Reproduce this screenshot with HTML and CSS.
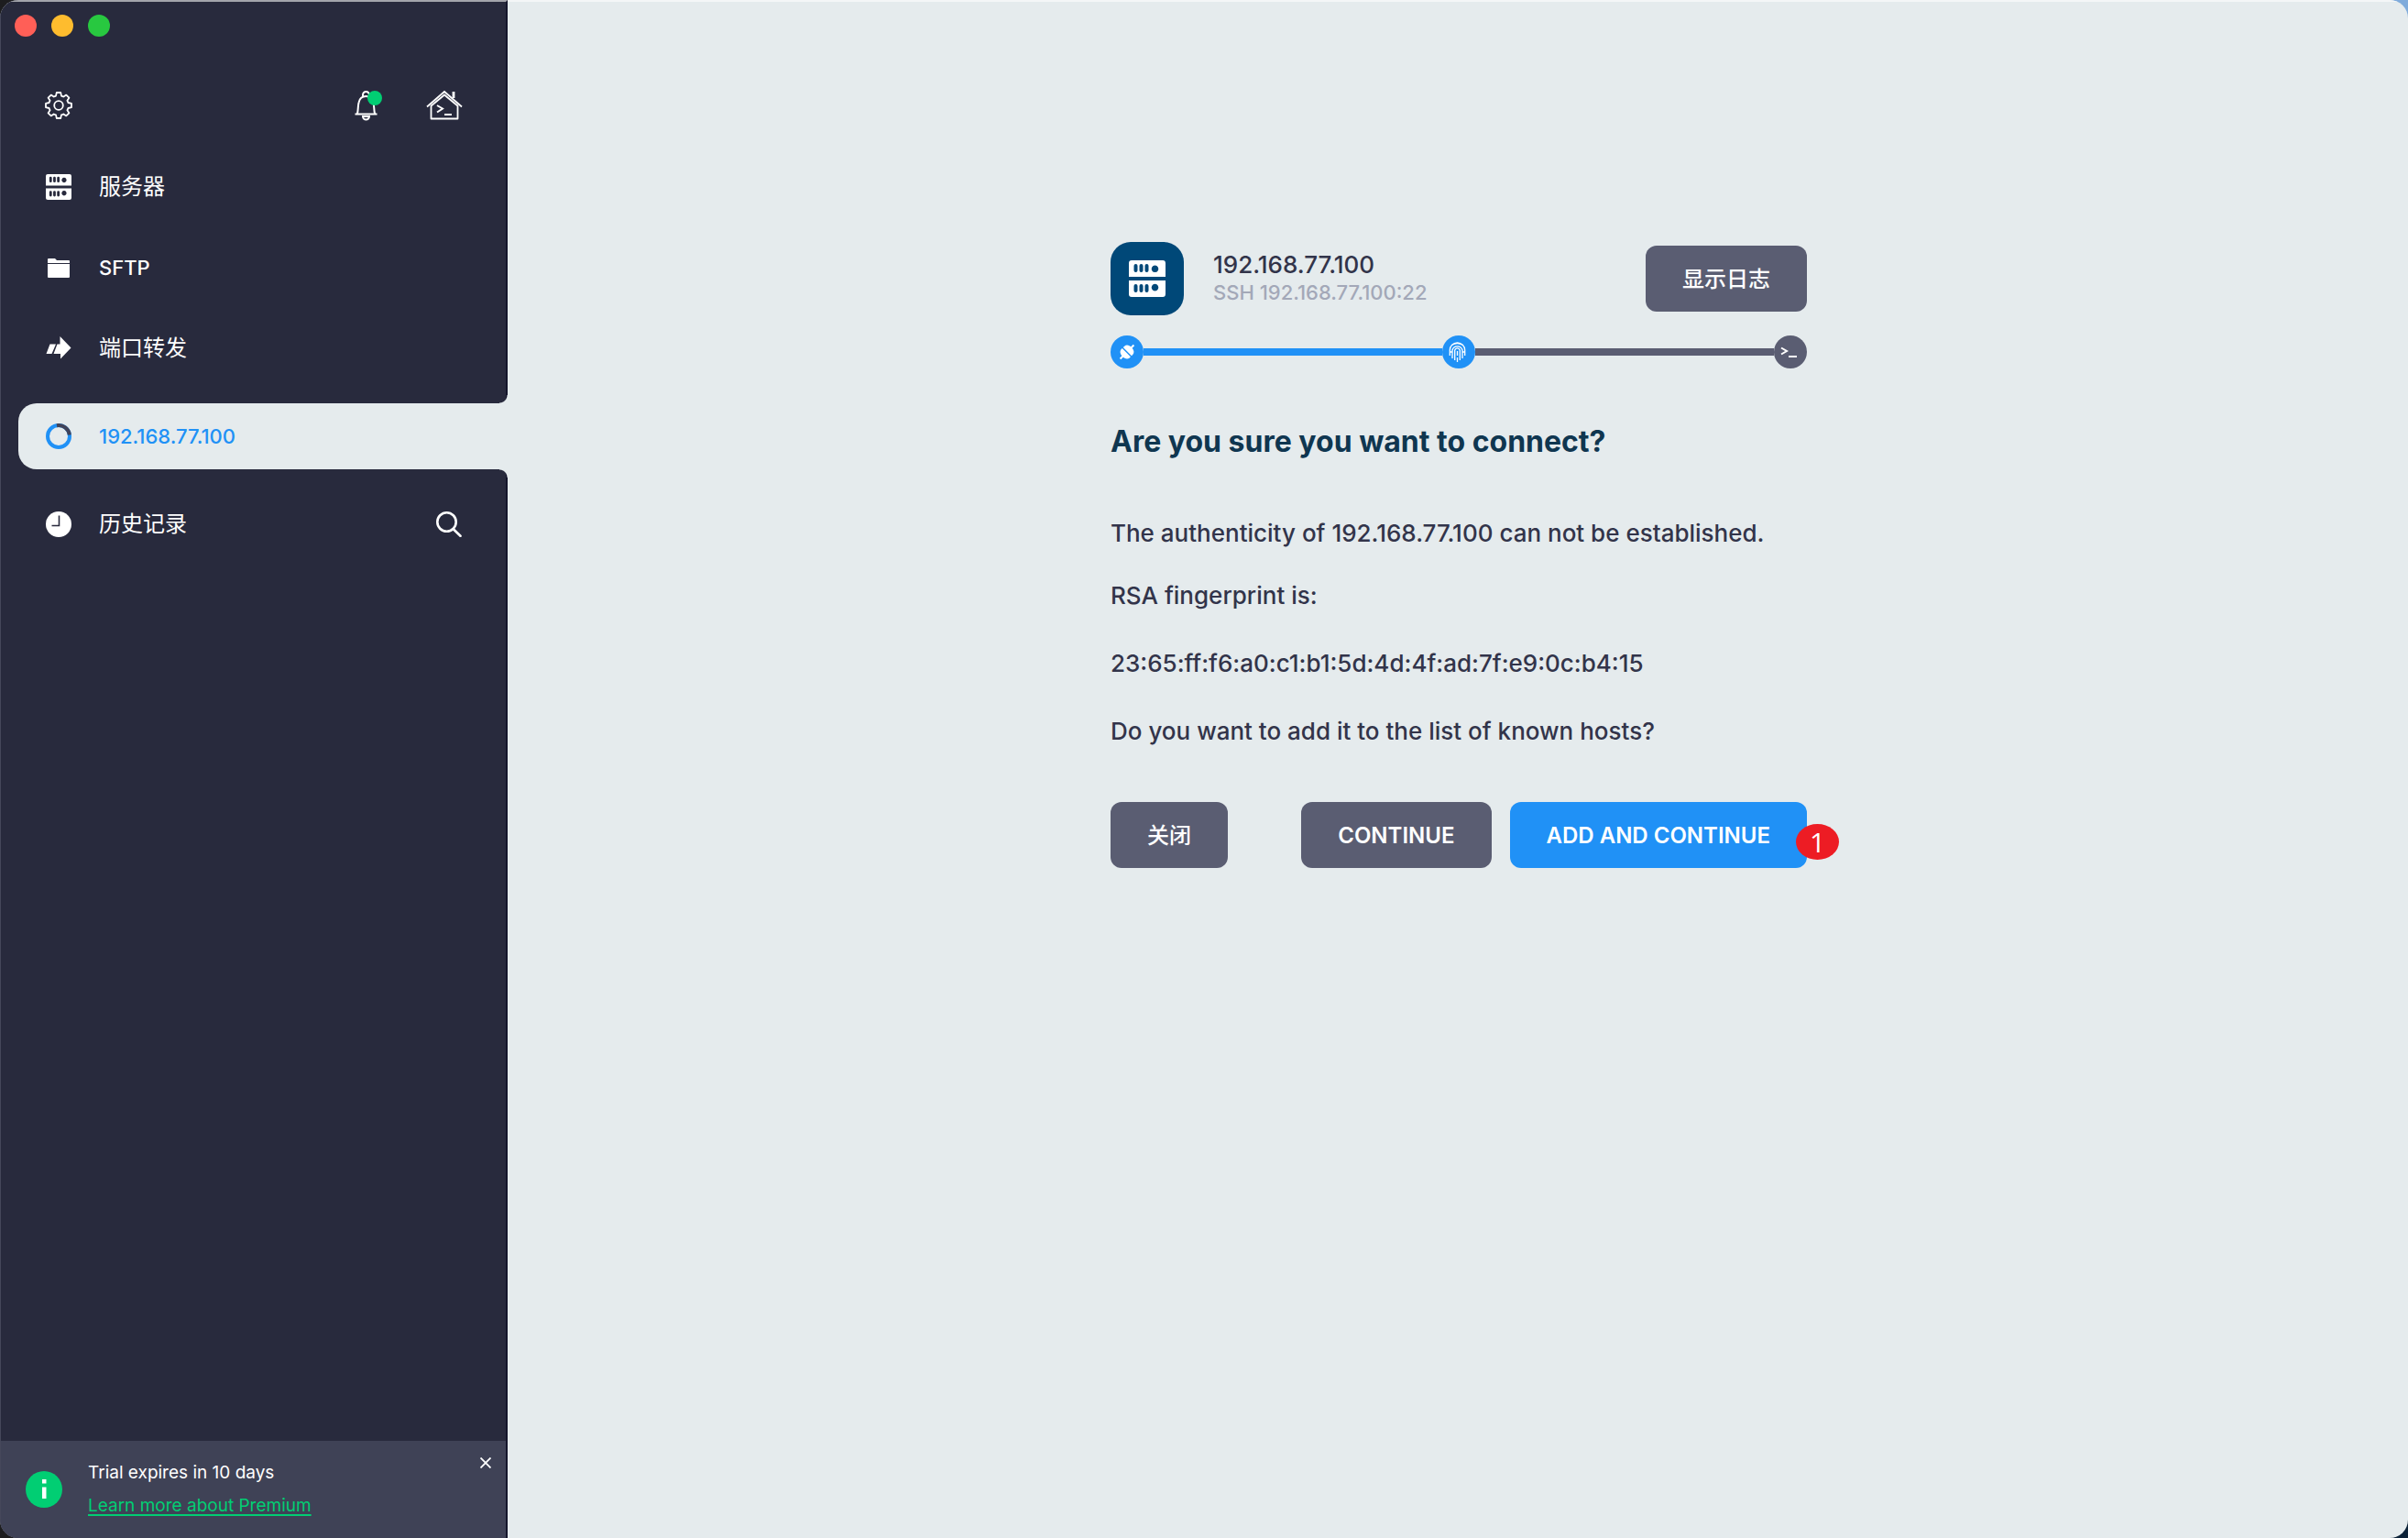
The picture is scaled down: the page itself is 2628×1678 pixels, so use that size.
FILE: index.html
```html
<!DOCTYPE html>
<html lang="zh-CN">
<head>
<meta charset="utf-8">
<title>192.168.77.100</title>
<meta name="viewport" content="width=device-width, initial-scale=1">
<link rel="stylesheet" href="styles.css">
</head>
<body>
<svg class="sprite" aria-hidden="true">
  <symbol id="server" viewBox="0 0 40 40">
    <path fill-rule="evenodd" d="M3 0H37A3 3 0 0 1 40 3V18H0V3A3 3 0 0 1 3 0ZM7.500 4A2 2 0 0 0 5.500 6V11A2 2 0 0 0 9.500 11V6A2 2 0 0 0 7.500 4ZM13.500 4A2 2 0 0 0 11.500 6V11A2 2 0 0 0 15.500 11V6A2 2 0 0 0 13.500 4ZM19.500 4A2 2 0 0 0 17.500 6V11A2 2 0 0 0 21.500 11V6A2 2 0 0 0 19.500 4ZM28.500 5.500A3.800 3.800 0 1 0 28.510 5.500Z"/>
    <path fill-rule="evenodd" d="M0 22H40V37A3 3 0 0 1 37 40H3A3 3 0 0 1 0 37ZM7.500 26A2 2 0 0 0 5.500 28V33A2 2 0 0 0 9.500 33V28A2 2 0 0 0 7.500 26ZM13.500 26A2 2 0 0 0 11.500 28V33A2 2 0 0 0 15.500 33V28A2 2 0 0 0 13.500 26ZM19.500 26A2 2 0 0 0 17.500 28V33A2 2 0 0 0 21.500 33V28A2 2 0 0 0 19.500 26ZM28.500 25.800A3.800 3.800 0 1 0 28.510 25.800Z"/>
  </symbol>
</svg>
<div class="window">
  <aside class="sidebar">
    <div class="lights">
      <button class="light light-close" aria-label="Close window"></button>
      <button class="light light-min" aria-label="Minimize window"></button>
      <button class="light light-max" aria-label="Zoom window"></button>
    </div>
    <div class="tools">
      <button class="tool" aria-label="Settings">
        <svg width="30" height="30" viewBox="0 0 30 30" fill="none" stroke="#fff" stroke-width="1.800" stroke-linejoin="round"><path d="M12.800 1H17.200L18 4.600Q19.300 5 20.300 5.600L23.300 3.600L26.400 6.700L24.400 9.700Q25 10.700 25.400 12L29 12.800V17.200L25.400 18Q25 19.300 24.400 20.300L26.400 23.300L23.300 26.400L20.300 24.400Q19.300 25 18 25.400L17.200 29H12.800L12 25.400Q10.700 25 9.700 24.400L6.700 26.400L3.600 23.300L5.600 20.300Q5 19.300 4.600 18L1 17.200V12.800L4.600 12Q5 10.700 5.600 9.700L3.600 6.700L6.700 3.600L9.700 5.600Q10.700 5 12 4.600Z"/><circle cx="15" cy="15" r="4.800"/></svg>
      </button>
      <div class="tools-right">
        <button class="tool tool-bell" aria-label="Notifications">
          <svg width="30" height="34" viewBox="0 0 30 34" fill="none" stroke="#fff" stroke-width="2"><path d="M2.500 26.500H26.500M5 26C6 22 5.500 18 6.500 14C7.500 9 10.500 7 14.500 7C18.500 7 21.500 9 22.500 14C23.500 18 23 22 24 26"/><path d="M11 7V5.500A3.500 3.500 0 0 1 18 5.500V7"/><path d="M11 29H18A3.500 3.500 0 0 1 11 29Z"/></svg>
          <span class="dot"></span>
        </button>
        <button class="tool" aria-label="Local terminal">
          <svg width="40" height="34" viewBox="0 0 40 34" fill="none" stroke="#fff" stroke-width="1.800"><path d="M1 18.500L20 2L39 18.500"/><path d="M5.500 17.500V31.500H34.500V17.500L20 5.500Z" stroke-linejoin="round"/><path d="M30 2V9" stroke-width="2.800"/><path d="M12 17L18 20.500L12 24.500M20 27H28" stroke-width="2"/></svg>
        </button>
      </div>
    </div>
    <nav class="nav">
      <a class="item" href="#hosts"><svg class="icon" viewBox="0 0 28 28"><use href="#server" width="28" height="28"/></svg><span class="cjk">服务器</span></a>
      <a class="item" href="#sftp"><svg class="icon" viewBox="0 0 28 28"><path d="M2 5Q2 4 3 4H10L12 6H25Q26 6 26 7V9H2ZM2 10H26V24Q26 25 25 25H3Q2 25 2 24Z"/></svg><span>SFTP</span></a>
      <a class="item" href="#forwarding"><svg class="icon" viewBox="0 0 28 28"><path d="M4.500 9.500H11L6.500 20H0.500ZM12.500 9.500H15.500V1L27.500 13.500L16 25.500V20H8.500Z"/></svg><span class="cjk">端口转发</span></a>
      <a class="item item-active" href="#session"><svg class="icon" viewBox="0 0 28 28" fill="none"><circle cx="14" cy="14" r="12" stroke="#2091f6" stroke-width="4"/><path d="M12 2.200A12 12 0 0 1 25.900 12.500" stroke="#414359" stroke-width="4"/></svg><span>192.168.77.100</span></a>
      <div class="item item-history">
        <a class="history-link" href="#history"><svg class="icon" viewBox="0 0 28 28"><circle cx="14" cy="14" r="14"/><path d="M14.500 4.500V15.500H6.500" fill="none" stroke="#282a3d" stroke-width="1.600"/></svg><span class="cjk">历史记录</span></a>
        <button class="tool" aria-label="Search"><svg width="28" height="28" viewBox="0 0 28 28" fill="none" stroke="#fff" stroke-width="2.600" stroke-linecap="round"><circle cx="11.500" cy="11.500" r="10.200"/><path d="M19 19.500L26.500 26.800"/></svg></button>
      </div>
    </nav>
    <section class="trial">
      <svg class="info" width="40" height="40" viewBox="0 0 40 40"><circle cx="20" cy="20" r="20" fill="#01ce73"/><path d="M18 9H22.500V13.500H18ZM18 17.500H22.500V30H18Z" fill="#fff"/></svg>
      <div class="trial-text"><span>Trial expires in 10 days</span><a href="#premium">Learn more about Premium</a></div>
      <button class="tool dismiss" aria-label="Dismiss"><svg width="12" height="12" viewBox="0 0 12 12" stroke="#fff" stroke-width="1.800"><path d="M.5 .5L11.500 11.500M11.500 .5L.5 11.500"/></svg></button>
    </section>
  </aside>
  <main class="main">
    <div class="dialog">
      <header class="host">
        <span class="host-icon"><svg width="40" height="40"><use href="#server"/></svg></span>
        <div class="host-text"><span class="host-name">192.168.77.100</span><span class="host-addr">SSH 192.168.77.100:22</span></div>
        <button class="btn btn-cjk">显示日志</button>
      </header>
      <div class="steps">
        <span class="step step-done"><svg width="36" height="36" viewBox="0 0 36 36"><g transform="rotate(-45 18 18)" fill="#fff"><path d="M17 11.500V24.500H15A5 6.500 0 0 1 11 19H7.500V17H11A5 6.500 0 0 1 15 11.500ZM18.500 11.500H20.500A5 6.500 0 0 1 25 17H28.500V19H25A5 6.500 0 0 1 20.500 24.500H18.500Z"/></g></svg></span>
        <span class="line line-done"></span>
        <span class="step step-done"><svg width="36" height="36" viewBox="0 0 36 36" fill="none" stroke="#fff" stroke-width="1.300"><path d="M8.300 22V16A8 8 0 0 1 24.700 16V22M11 25V16A5.700 5.700 0 0 1 22 16V25M13.700 27V16A2.900 2.900 0 0 1 19.300 16V27M16.500 17V22M16.500 24V29M10.500 10.500Q16.500 6.500 22.500 10.500M8.300 18H11M22 18H24.700"/></svg></span>
        <span class="line"></span>
        <span class="step"><svg width="36" height="36" viewBox="0 0 36 36" fill="none" stroke="#fff" stroke-width="2"><path d="M8 13.500L14 17L8 20.500M16 23H25"/></svg></span>
      </div>
      <h1 class="title">Are you sure you want to connect?</h1>
      <div class="body">
        <p class="lead">The authenticity of 192.168.77.100 can not be established.</p>
        <p>RSA fingerprint is:</p>
        <p>23:65:ff:f6:a0:c1:b1:5d:4d:4f:ad:7f:e9:0c:b4:15</p>
        <p>Do you want to add it to the list of known hosts?</p>
      </div>
      <footer class="actions">
        <button class="btn btn-cjk btn-cancel">关闭</button>
        <button class="btn">CONTINUE</button>
        <button class="btn btn-primary">ADD AND CONTINUE<span class="badge">1</span></button>
      </footer>
    </div>
  </main>
</div>
</body>
</html>
```
FILE: styles.css
```css
* { box-sizing: border-box; }
body {
  margin: 0;
  background:
    linear-gradient(90deg, #1d1d1f 50%, transparent 50%),
    linear-gradient(#7fabdb 50%, #0c2238 50%);
  font-family: Inter, "Noto Sans CJK SC", sans-serif;
  font-size: 22px;
  font-weight: 500;
  color: #32344a;
}
button { font: inherit; color: inherit; border: 0; padding: 0; background: none; cursor: pointer; }
p, h1 { margin: 0; }
svg { display: block; }
.sprite { position: absolute; width: 0; height: 0; }

.window {
  display: flex;
  min-height: 100vh;
  border-radius: 20px;
  overflow: hidden;
  background: #e5ebed;
}

/* Sidebar */
.sidebar {
  display: flex;
  flex-direction: column;
  flex: none;
  width: 554px;
  background: #282a3d;
  border-top: 2px solid #a3a4ab;
  border-left: 1px solid #45475a;
  border-right: 2px solid #14152b;
  color: #fff;
}
.lights { display: flex; gap: 16px; padding: 14px 15px; }
.light { width: 24px; height: 24px; border-radius: 50%; }
.light-close { background: #ff5f57; }
.light-min { background: #febc2e; }
.light-max { background: #28c840; }
.tools { display: flex; justify-content: space-between; align-items: center; padding: 44px 47px 0 48px; }
.tools-right { display: flex; gap: 50px; }
.tool { flex: none; }
.tool-bell { position: relative; }
.dot { position: absolute; top: 1px; right: -2px; width: 16px; height: 16px; border-radius: 50%; background: #01ce73; }

.nav { display: flex; flex-direction: column; margin-top: 28px; }
.item { display: flex; align-items: center; gap: 30px; height: 88px; padding: 0 48px 0 49px; color: #fff; text-decoration: none; }
.cjk { font-size: 24px; font-weight: 400; line-height: 32px; }
.icon { flex: none; width: 28px; height: 28px; fill: #fff; }
.item-active {
  position: relative;
  height: 72px;
  margin: 16px -2px 0 19px;
  padding-left: 30px;
  border-radius: 20px 0 0 20px;
  background: #e5ebed;
  color: #2091f6;
}
.item-active .icon { fill: none; }
.item-active::before, .item-active::after {
  content: "";
  position: absolute;
  right: 0;
  width: 9px;
  height: 9px;
}
.item-active::before { bottom: 100%; background: radial-gradient(circle at 0 0, transparent 8px, #e5ebed 9px); }
.item-active::after { top: 100%; background: radial-gradient(circle at 0 100%, transparent 8px, #e5ebed 9px); }
.item-history { justify-content: space-between; margin-top: 16px; }
.history-link { display: flex; align-items: center; gap: 30px; color: inherit; text-decoration: none; }

.trial { display: flex; align-items: center; gap: 28px; min-height: 106px; margin-top: auto; padding: 16px 14px 16px 27px; background: #3f4256; font-size: 19px; font-weight: 400; }
.trial-text { display: flex; flex-direction: column; flex: 1; gap: 8px; line-height: 28px; }
.trial a { color: #01ce73; text-decoration-thickness: 2px; text-underline-offset: 3px; }
.dismiss { align-self: flex-start; padding: 2px; }

/* Connection dialog */
.main { flex: 1; padding: 262px 40px 40px 42px; border-top: 2px solid #f4f6f7; }
.dialog { max-width: 760px; margin: 0 auto; }
.host { display: flex; align-items: center; }
.host-icon { display: grid; place-items: center; width: 80px; height: 80px; border-radius: 22px; background: #004878; fill: #fff; }
.host-text { display: flex; flex-direction: column; flex: 1; margin-left: 32px; line-height: 30px; }
.host-name { font-size: 26px; }
.host-addr { color: #a3a8b8; }

.btn { height: 72px; padding: 0 40px; border-radius: 12px; background: #5a5d72; color: #fff; font-size: 24px; font-weight: 600; }
.btn-cjk { padding-bottom: 4px; font-weight: 500; }
.btn-primary { position: relative; background: #2091f6; }
.badge {
  position: absolute;
  top: 24px;
  right: -35px;
  width: 47px;
  height: 39px;
  border-radius: 50%;
  background: #ed1c24;
  font: 400 30px/39px "Open Sans", sans-serif;
}

.steps { display: flex; align-items: center; margin-top: 22px; }
.step { width: 36px; height: 36px; border-radius: 50%; background: #5a5d72; }
.step-done { background: #2091f6; }
.line { flex: 1; height: 8px; background: #5a5d72; }
.line-done { background: #2091f6; }

.title { margin-top: 60px; font-size: 32px; line-height: 40px; color: #0f3650; }
.body { display: flex; flex-direction: column; gap: 38px; margin-top: 62px; font-size: 26px; line-height: 36px; }
.lead { margin-bottom: -6px; }
.actions { display: flex; gap: 20px; margin-top: 59px; }
.btn-cancel { margin-right: auto; }
```
